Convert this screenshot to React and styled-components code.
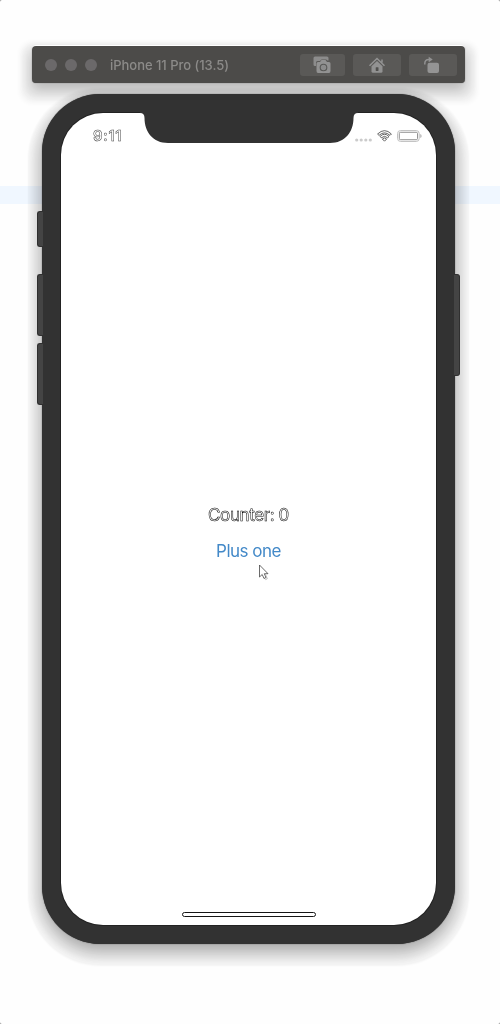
import React, { useState } from "react";
import styled, { createGlobalStyle } from "styled-components";

const GlobalStyle = createGlobalStyle`
  html { background: #8c8c8c; }
  body { margin: 0; font-family: Inter, "Liberation Sans", sans-serif; }
  * { box-sizing: border-box; }
`;

const Desktop = styled.main`
  width: 500px;
  height: 1024px;
  overflow: hidden;
  border-radius: 2px;
  padding-top: 46px;
  display: flex;
  flex-direction: column;
  background: linear-gradient(#f0f7ff, #f0f7ff) 0 186px / 100% 18px no-repeat #fefefe;
`;

const Toolbar = styled.header`
  width: 433px;
  height: 37px;
  margin-left: 32px;
  padding: 0 8px 0 13px;
  display: flex;
  align-items: center;
  border-radius: 4px;
  background: #4c4b49;
  box-shadow:
    0 -1px 0 #fff,
    0 0 1px rgba(0, 0, 0, 0.6),
    0 7px 12px rgba(0, 0, 0, 0.2),
    0 7px 6px 8px rgba(0, 0, 0, 0.04),
    0 8px 5px 12px rgba(0, 0, 0, 0.045);
`;

const Lights = styled.div`
  display: flex;
  gap: 8px;
`;

const Light = styled.span`
  width: 12px;
  height: 12px;
  border-radius: 50%;
  background: #6b696a;
`;

const Title = styled.h1`
  flex: 1;
  margin: 1px 0 0 13px;
  font-size: 13px;
  font-weight: 500;
  line-height: 18px;
  letter-spacing: -0.03px;
  white-space: nowrap;
  color: #8c8b89;
  will-change: transform;
`;

const Tools = styled.div`
  display: flex;
  gap: 8px;
`;

const Tool = styled.button`
  width: ${(p) => p.$width}px;
  height: 22px;
  padding: 0;
  display: flex;
  align-items: center;
  justify-content: center;
  border: 0;
  border-radius: 3px;
  background: #5a5957;
  svg { display: block; }
`;

const Phone = styled.section`
  position: relative;
  width: 413px;
  height: 850px;
  margin: 11px 0 0 42px;
  padding: 19px;
  border-radius: 58px;
  background: #323232;
  box-shadow:
    0 0 1px 0 rgba(0, 0, 0, 0.8),
    0 7px 14px rgba(0, 0, 0, 0.27),
    0 7px 4px 9px rgba(0, 0, 0, 0.04),
    0 8px 2px 14px rgba(0, 0, 0, 0.045);
`;

const SideButton = styled.span`
  position: absolute;
  ${(p) => p.$side}: -5px;
  top: ${(p) => p.$top}px;
  width: 6px;
  height: ${(p) => p.$height}px;
  border: 1px solid #303030;
  border-${(p) => (p.$side === "left" ? "right" : "left")}: 0;
  border-radius: ${(p) => (p.$side === "left" ? "3px 0 0 3px" : "0 3px 3px 0")};
  background: #444;
`;

const Screen = styled.div`
  height: 812px;
  display: flex;
  flex-direction: column;
  border-radius: 42px;
  background: #fff;
  box-shadow: 0 0 0 1px #222;
`;

const Notch = styled.svg`
  position: absolute;
  left: 98px;
  top: 18px;
`;

const StatusBar = styled.div`
  height: 44px;
  padding: 1px 14px 0 32px;
  display: flex;
  align-items: center;
  justify-content: space-between;
`;

const Clock = styled.time`
  font-size: 15px;
  font-weight: 600;
  line-height: 20px;
  letter-spacing: 0.5px;
  color: #fff;
  -webkit-text-stroke: 0.5px #444;
  will-change: transform;
`;

const Signals = styled.div`
  display: flex;
  align-items: center;
  gap: 5px;
`;

const Content = styled.div`
  flex: 1;
  display: flex;
  flex-direction: column;
  align-items: center;
  justify-content: center;
  padding-bottom: 3px;
  will-change: transform;
`;

const Counter = styled.p`
  margin: 0;
  font-size: 17px;
  line-height: 20px;
  letter-spacing: -0.4px;
  color: #fff;
  -webkit-text-stroke: 0.5px #000;
`;

const PlusButton = styled.button`
  margin: 16px 0 0;
  padding: 0;
  border: 0;
  background: none;
  font: 400 17px/20px Inter, "Liberation Sans", sans-serif;
  letter-spacing: -0.5px;
  color: #4389c8;
`;

const Cursor = styled.svg`
  position: absolute;
  left: 216px;
  top: 470px;
`;

const HomeIndicator = styled.div`
  width: 134px;
  height: 5px;
  margin: 0 auto 8px;
  border: 1px solid #151515;
  border-radius: 3px;
`;

function CameraIcon() {
  return (
    <svg width="19" height="18" viewBox="0 0 19 18">
      <path d="M2 .5h12q1.500 0 1.500 1.500v2.500h-1L13.200 3.500H8.500L7 5H4.500Q3 5 3 6.500V10H2Q.5 10 .5 8.500V2Q.5.5 2 .5Z" fill="#8c8c8c" />
      <path d="M5 6h2l1.500-2h4L14 6h2q1.500 0 1.500 1.500V15q0 2-1.500 2H5q-1.500 0-1.500-2V7.500Q3.500 6 5 6Z" fill="#929292" />
      <circle cx="10.500" cy="11.500" r="3.300" fill="#8c8c8c" stroke="#585856" strokeWidth="1.100" />
    </svg>
  );
}

function HomeIcon() {
  return (
    <svg width="18" height="18" viewBox="0 0 18 18">
      <path d="M1.500 9.800 9 2.500l7.500 7.300M14 6.500V3.500" fill="none" stroke="#929292" strokeWidth="1.500" />
      <path d="M3.500 10.300 9 5l5.500 5.300v5q0 1.500-1.500 1.500H5q-1.500 0-1.500-1.500Z" fill="#929292" />
      <rect x="7.700" y="11.300" width="2.800" height="3.600" rx=".4" fill="#51504e" />
    </svg>
  );
}

function RotateIcon() {
  return (
    <svg width="18" height="18" viewBox="0 0 18 18">
      <rect x="3.500" y="6.700" width="11.500" height="10.300" rx="2" fill="#949494" />
      <path d="M.8 8.500V7.500q0-4 4.200-4" fill="none" stroke="#929292" strokeWidth="1.500" />
      <path d="m4.700.7 4 2.800-4 2.800Z" fill="#929292" />
    </svg>
  );
}

function SignalDots() {
  return (
    <svg width="17" height="16" viewBox="0 0 17 16">
      {[1.7, 6.2, 10.8, 15.3].map((x) => (
        <circle key={x} cx={x} cy="12" r="1.600" fill="#cbcbcb" />
      ))}
    </svg>
  );
}

function WifiIcon() {
  return (
    <svg width="15" height="12" viewBox="0 0 15 12" fill="none" stroke="#333" strokeWidth=".75">
      <path d="M.6 4Q7.500-2.700 14.400 4L13 5.400Q7.500.3 2 5.400Z" />
      <path d="M3 6.500Q7.500 2 12 6.500L10.700 7.800Q7.500 4.800 4.300 7.800Z" />
      <path d="M5.400 9Q7.500 6.800 9.600 9L7.500 11.200Z" />
    </svg>
  );
}

function BatteryIcon() {
  return (
    <svg width="25" height="12" viewBox="0 0 25 12" fill="none">
      <rect x=".6" y=".6" width="21.600" height="10.800" rx="2.900" stroke="#bdbdbd" />
      <rect x="2.300" y="2.300" width="18.200" height="7.400" rx="1.200" stroke="#777" strokeWidth=".8" />
      <path d="M23.300 4v4q1.300-.6 1.300-2t-1.300-2Z" fill="#aaa" />
    </svg>
  );
}

export default function App() {
  const [count, setCount] = useState(0);
  return (
    <>
      <GlobalStyle />
      <Desktop>
        <Toolbar>
          <Lights>
            <Light />
            <Light />
            <Light />
          </Lights>
          <Title>iPhone 11 Pro (13.5)</Title>
          <Tools>
            <Tool $width={45}><CameraIcon /></Tool>
            <Tool $width={48}><HomeIcon /></Tool>
            <Tool $width={48}><RotateIcon /></Tool>
          </Tools>
        </Toolbar>
        <Phone>
          <SideButton $side="left" $top={117} $height={36} />
          <SideButton $side="left" $top={180} $height={62} />
          <SideButton $side="left" $top={249} $height={62} />
          <SideButton $side="right" $top={180} $height={102} />
          <Screen>
            <StatusBar>
              <Clock>9:11</Clock>
              <Signals>
                <SignalDots />
                <WifiIcon />
                <BatteryIcon />
              </Signals>
            </StatusBar>
            <Content>
              <Counter>Counter: {count}</Counter>
              <PlusButton onClick={() => setCount(count + 1)}>Plus one</PlusButton>
            </Content>
            <HomeIndicator />
          </Screen>
          <Notch width="218" height="31" viewBox="0 0 218 31">
            <path
              d="M0 0H218V1Q213.500 1 213.500 6C213.500 20 205 31 190 31H28C13 31 4.500 20 4.500 6Q4.500 1 0 1Z"
              fill="#323232"
            />
          </Notch>
          <Cursor width="14" height="18" viewBox="0 0 14 18">
            <path d="M1.500 1v12l2.700-2.500 1.800 4 2-1-1.700-3.800H10Z" fill="#fff" stroke="#444" strokeWidth=".8" />
            <path d="m7 9.500 2.300 5.200-2 1" fill="none" stroke="#aaa" strokeWidth=".8" />
          </Cursor>
        </Phone>
      </Desktop>
    </>
  );
}
